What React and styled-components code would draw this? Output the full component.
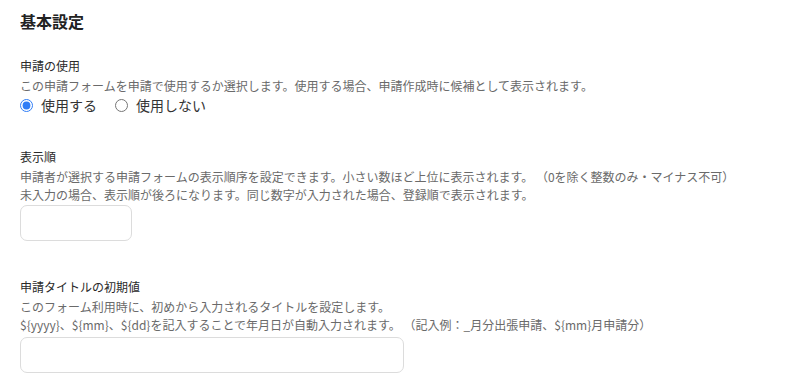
import React from "react";
import styled, { createGlobalStyle } from "styled-components";

const Global = createGlobalStyle`
  html, body { margin: 0; padding: 0; background: #fff; }
  body { font-family: "Noto Sans CJK JP", "Noto Sans", sans-serif; color: #333; }
`;

const Page = styled.div`
  padding: 9px 20px 0;
`;

const Title = styled.h2`
  margin: 0 0 24px;
  font-size: 16px;
  line-height: 24px;
  font-weight: 700;
  color: #222;
`;

const Section = styled.section`
  margin-bottom: ${(p) => p.$gap || 36}px;
`;

const Label = styled.div`
  font-size: 12px;
  line-height: 18px;
  color: #2a2a2a;
  margin-bottom: 2px;
`;

const Desc = styled.p`
  margin: 0;
  font-size: 12px;
  line-height: 18px;
  color: #6a6a6a;
  white-space: nowrap;
`;

const RadioRow = styled.div`
  display: flex;
  align-items: center;
  gap: 18px;
  height: 20px;
`;

const RadioLabel = styled.label`
  display: flex;
  align-items: center;
  gap: 8px;
  font-size: 14px;
  color: #333;
`;

const Radio = styled.input.attrs({ type: "radio" })`
  margin: 0;
  width: 13px;
  height: 13px;
  accent-color: #2f7df6;
`;

const TextInput = styled.input`
  display: block;
  box-sizing: border-box;
  margin-top: ${(p) => p.$top || 1}px;
  width: ${(p) => p.$w}px;
  height: 36px;
  border: 1px solid #dcdcdc;
  border-radius: 7px;
  background: #fff;
  outline: none;
  font-size: 14px;
  padding: 0 10px;
`;

export default function App() {
  return (
    <>
      <Global />
      <Page>
        <Title>基本設定</Title>
        <Section $gap={33}>
          <Label>申請の使用</Label>
          <Desc>この申請フォームを申請で使用するか選択します。使用する場合、申請作成時に候補として表示されます。</Desc>
          <RadioRow>
            <RadioLabel>
              <Radio name="use" defaultChecked />
              使用する
            </RadioLabel>
            <RadioLabel>
              <Radio name="use" />
              使用しない
            </RadioLabel>
          </RadioRow>
        </Section>
        <Section $gap={37}>
          <Label>表示順</Label>
          <Desc>申請者が選択する申請フォームの表示順序を設定できます。小さい数ほど上位に表示されます。 （0を除く整数のみ・マイナス不可）</Desc>
          <Desc>未入力の場合、表示順が後ろになります。同じ数字が入力された場合、登録順で表示されます。</Desc>
          <TextInput $w={112} />
        </Section>
        <Section>
          <Label>申請タイトルの初期値</Label>
          <Desc>このフォーム利用時に、初めから入力されるタイトルを設定します。</Desc>
          <Desc>{"${yyyy}、${mm}、${dd}を記入することで年月日が自動入力されます。 （記入例：_月分出張申請、${mm}月申請分）"}</Desc>
          <TextInput $w={384} $top={3} />
        </Section>
      </Page>
    </>
  );
}
